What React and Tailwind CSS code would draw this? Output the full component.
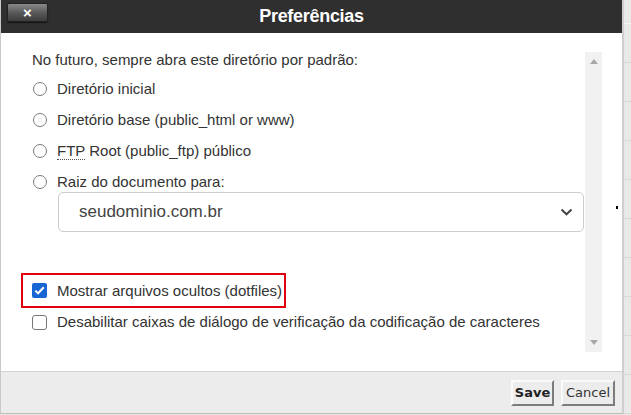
import React from "react";

const sans = { fontFamily: '"Liberation Sans", Arial, sans-serif' };

function Radio({ children }) {
  return (
    <div className="flex items-center h-[16px] leading-[16px]">
      <span className="w-[14px] h-[14px] rounded-full border border-[#7a7a7a] bg-white shrink-0 ml-[1px]" />
      <span className="ml-[10px]">{children}</span>
    </div>
  );
}

export default function App() {
  const lines = [0, 1, 2, 3, 4, 5, 6, 7, 8, 9];
  return (
    <div
      className="w-[631px] h-[415px] flex bg-[#e6e6e6] overflow-hidden text-[#333]"
      style={sans}
    >
      <div className="w-[624px] h-[414px] flex flex-col shrink-0 border-l border-[#c9c9c9] border-r-2 border-r-[#cfcfcf] border-b border-b-[#bdbdbd]">
        {/* Header */}
        <div className="h-[33px] bg-[#2f2f2f] grid grid-cols-[1fr_auto_1fr] items-start shrink-0">
          <div className="pl-[6px] pt-[3px]">
            <button className="w-[41px] h-[19px] rounded-[2px] bg-gradient-to-b from-[#8a8a8a] via-[#5a5a5a] to-[#3c3c3c] border border-[#222] flex items-center justify-center text-white font-bold text-[15px] leading-none shadow-[0_1px_1px_rgba(0,0,0,0.6)]">
              ×
            </button>
          </div>
          <div className="text-white font-bold text-[18px] leading-[33px] tracking-[-0.3px]">
            Preferências
          </div>
          <div />
        </div>

        {/* Body */}
        <div className="flex-1 bg-white flex pt-[19px] pb-[19px] pl-[31px]">
          <div className="flex-1 flex flex-col text-[15px]">
            <div className="leading-[16px]">
              No futuro, sempre abra este diretório por padrão:
            </div>
            <div className="flex flex-col gap-[15px] mt-[13px]">
              <Radio>Diretório inicial</Radio>
              <Radio>Diretório base (public_html or www)</Radio>
              <Radio>
                <abbr className="no-underline border-b border-dotted border-[#555]" style={{ textDecoration: "none" }}>
                  FTP
                </abbr>{" "}
                Root (public_ftp) público
              </Radio>
              <Radio>Raiz do documento para:</Radio>
            </div>
            <div className="mt-[2px] ml-[26px] mr-[1px] h-[40px] border border-[#cdcdcd] rounded-[5px] flex items-center justify-between pl-[20px] pr-[10px] text-[17px] text-[#444]">
              <span>seudominio.com.br</span>
              <svg width="13" height="8" viewBox="0 0 13 8" fill="none">
                <path d="M1.5 1.5 L6.5 6.3 L11.5 1.5" stroke="#444" strokeWidth="2" />
              </svg>
            </div>
            <div className="mt-[41px] -ml-[11px] w-[265px] h-[35px] border-2 border-[#e1000f] flex items-center pl-[9px]">
              <span className="w-[15px] h-[15px] rounded-[2px] bg-[#1866d4] flex items-center justify-center shrink-0">
                <svg width="11" height="9" viewBox="0 0 11 9" fill="none">
                  <path d="M1.3 4.6 L4.1 7.3 L9.8 1.2" stroke="white" strokeWidth="2" />
                </svg>
              </span>
              <span className="ml-[10px] leading-[16px] whitespace-nowrap">Mostrar arquivos ocultos (dotfiles)</span>
            </div>
            <div className="mt-[6px] flex items-center leading-[16px]">
              <span className="w-[15px] h-[15px] rounded-[3px] border border-[#777] bg-white shrink-0" />
              <span className="ml-[10px] whitespace-nowrap">
                Desabilitar caixas de diálogo de verificação da codificação de caracteres
              </span>
            </div>
          </div>
          {/* Scrollbar */}
          <div className="w-[17px] bg-[#f1f1f1] flex flex-col items-center justify-between py-[7px] shrink-0">
            <svg width="8" height="5" viewBox="0 0 8 5">
              <path d="M0 5 L4 0 L8 5 Z" fill="#a8a8a8" />
            </svg>
            <svg width="8" height="5" viewBox="0 0 8 5">
              <path d="M0 0 L8 0 L4 5 Z" fill="#a8a8a8" />
            </svg>
          </div>
          <div className="w-[20px] shrink-0 flex flex-col items-end pr-[4px] pt-[154px]">
            <span className="w-[2px] h-[3px] bg-black" />
          </div>
        </div>

        {/* Footer */}
        <div className="h-[42px] shrink-0 bg-[#ececec] border-t border-[#d2d2d2] flex justify-end items-start pt-[8px] pr-[7px] gap-[7px]">
          <button
            className="w-[43px] h-[26px] bg-[#ececec] border-2 border-t-[#fafafa] border-l-[#fafafa] border-r-[#7c7c7c] border-b-[#7c7c7c] font-bold text-[13px] text-[#222] flex items-center justify-center"
            style={{ fontFamily: '"DejaVu Sans", Verdana, sans-serif' }}
          >
            Save
          </button>
          <button
            className="w-[54px] h-[26px] bg-[#ececec] border-2 border-t-[#fafafa] border-l-[#fafafa] border-r-[#7c7c7c] border-b-[#7c7c7c] text-[13px] text-[#333] flex items-center justify-center"
            style={{ fontFamily: '"DejaVu Sans", Verdana, sans-serif' }}
          >
            Cancel
          </button>
        </div>
      </div>
      {/* Background page strip */}
      <div className="flex-1 flex flex-col bg-[#e9e9e9]">
        <div className="h-[24px] border-b border-[#f7f7f7] shrink-0" />
        {lines.map((i) => (
          <div key={i} className="h-[39px] border-b border-[#d8d8d8] shrink-0" />
        ))}
      </div>
    </div>
  );
}
